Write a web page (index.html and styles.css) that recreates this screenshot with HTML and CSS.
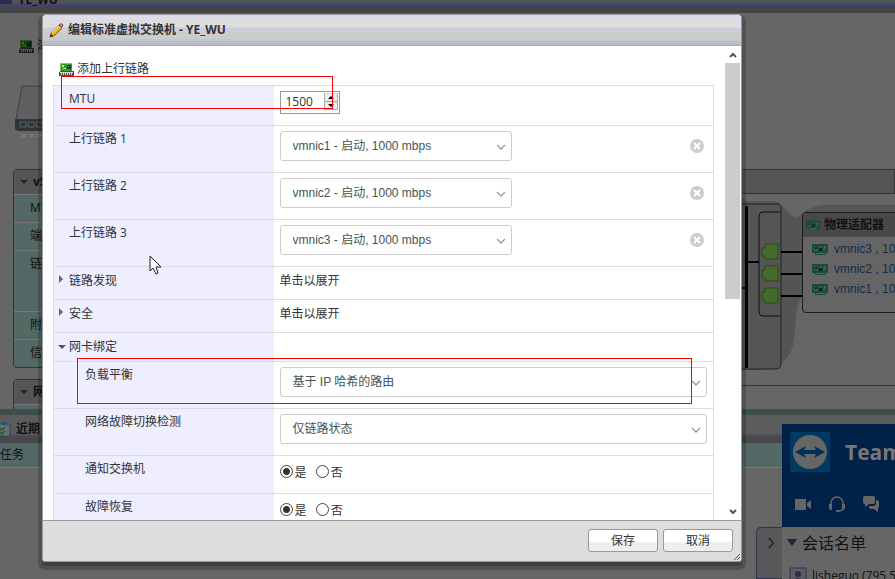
FILE: index.html
```html
<!DOCTYPE html>
<html lang="zh-CN">
<head>
    <meta charset="utf-8">
    <title>编辑标准虚拟交换机 - YE_WU</title>
    <link rel="stylesheet" href="styles.css">
</head>
<body>
    <!-- shared icons -->
    <svg class="defs" aria-hidden="true">
        <symbol id="nic" viewBox="0 0 15 13">
            <path d="M1 0h12v8H1z" fill="#2f9a3a"/>
            <path d="M1 0h12v1H1zM1 1h1v7H1z" fill="#7ecb62"/>
            <path d="M3 2h2v2H3zM4 5h3v1H4z" fill="#e8e36a"/>
            <path d="M8 2h4v4H8z" fill="#14421c"/>
            <path d="M9 3h1v1H9z" fill="#7ecb62"/>
            <path d="M1 8h14v5H0V9h1z" fill="#4a4f4a"/>
            <path d="M1 9h13v1H1zM2 10h1v2H2zM4 10h1v2H4zM6 10h1v2H6zM8 10h1v2H8zM10 10h1v2h-1zM12 10h1v2h-1z" fill="#d5d8d5"/>
        </symbol>
        <symbol id="chip" viewBox="0 0 16 11">
            <path d="M0 0h16v9h-2v2H3V9H0z" fill="#1c4a34"/>
            <path d="M2 2h4v5H2zM11 2h3v5h-3z" fill="#2c5a50"/>
            <path d="M3 3h2v2H3zM7 4h3v3H7z" fill="#10201c"/>
            <path d="M8 2h1v2H8zM12 3h2v1h-2zM4 9h9v1H4z" fill="#5a6a48"/>
        </symbol>
        <symbol id="chevron" viewBox="0 0 10 6">
            <path d="M1 1l4 4 4-4" fill="none" stroke="#999" stroke-width="1.3"/>
        </symbol>
        <symbol id="remove" viewBox="0 0 14 14">
            <circle cx="7" cy="7" r="7" fill="#ccc"/>
            <path d="M4 4l6 6M10 4l-6 6" stroke="#fff" stroke-width="2"/>
        </symbol>
    </svg>

    <!-- page behind the dialog -->
    <div class="page">
        <header class="topbar"><span class="topbar-icon"></span><b>YE_WU</b></header>
        <main class="workspace">
            <div class="side">
                <div class="side-tool"><svg class="nic"><use href="#nic"/></svg>添</div>
                <svg class="host" viewBox="0 0 60 54">
                    <path d="M7 1h53v34H1z" fill="#606060" stroke="#3c4044"/>
                    <path d="M0 34h60v12H3l-3-2z" fill="#2e3438"/>
                    <path d="M5 37h6v5H5zM13 37h6v5h-6zM21 37h6v5h-6z" fill="none" stroke="#5a6266"/>
                    <path d="M6 49h5v4H6zM14 49h5v3h-5zM22 49h5v3h-5z" fill="#757575"/>
                </svg>
                <section class="panel">
                    <h2><i class="tri down"></i>vS</h2>
                    <p>MT</p>
                    <p>端</p>
                    <p class="tall">链</p>
                    <p>附</p>
                    <p>信</p>
                </section>
                <section class="panel cut">
                    <h2><i class="tri down"></i>网</h2>
                    <p></p>
                </section>
            </div>
            <div class="topology">
                <div class="topology-head"></div>
                <div class="topology-canvas">
                    <svg class="wires" viewBox="0 0 155 192">
                        <path d="M0 0l6 7h30c8 3 12 15 19 16s8-10 30-12h70v104h-55c-20-2-30-13-38-12-8 10-5 30-9 48s-20 25-38 25H0z" fill="#545454"/>
                        <path d="M0 10h36q5 0 5 5v155q0 5-5 5H0" fill="#555" stroke="#222"/>
                        <path d="M41 18H23q-4 0-4 4v96q0 4 4 4h18" fill="none" stroke="#111"/>
                        <path d="M5 12h3v162H5zM8 67h11v2H8zM0 93h5v2H0zM41 57h21v2H41zM41 79h21v2H41zM41 101h21v2H41z" fill="#000"/>
                        <path d="M25 50h13v15H25v-3h-3v-8h3zM25 72h13v15H25v-3h-3v-8h3zM25 94h13v15H25v-3h-3v-8h3z" fill="#446a2e" stroke="#2b4a10"/>
                    </svg>
                    <section class="adapters">
                        <h2><svg class="chip"><use href="#chip"/></svg>物理适配器</h2>
                        <ul>
                            <li><svg class="chip"><use href="#chip"/></svg><a href="#">vmnic3 , 10</a></li>
                            <li><svg class="chip"><use href="#chip"/></svg><a href="#">vmnic2 , 10</a></li>
                            <li><svg class="chip"><use href="#chip"/></svg><a href="#">vmnic1 , 10</a></li>
                        </ul>
                    </section>
                </div>
            </div>
        </main>
        <section class="tasks">
            <h2>
                <svg class="clip" viewBox="0 0 12 16">
                    <path d="M-2 3h12v12H-2z" fill="#66706e" stroke="#1f4a5c"/>
                    <path d="M2 1h5v3H2z" fill="#1f5a78"/>
                    <path d="M0 7l2 2 3-3M0 11l2 2 3-3" fill="none" stroke="#1f5a1f" stroke-width="1.3"/>
                </svg>近期
            </h2>
            <div class="tasks-cols">任务</div>
        </section>
    </div>

    <!-- contact list window -->
    <aside class="viewer">
        <button type="button" class="viewer-toggle" aria-label="折叠">
            <svg viewBox="0 0 8 14"><path d="M1 1l5 6-5 6" fill="none" stroke="#222833" stroke-width="2"/></svg>
        </button>
        <div class="viewer-main">
            <div class="viewer-head">
                <div class="viewer-brand">
                    <svg class="logo" viewBox="0 0 40 40">
                        <rect width="40" height="40" rx="2" fill="#003a60"/>
                        <circle cx="20" cy="20" r="17" fill="#666"/>
                        <path d="M5 20l11-6-2 4h12l-2-4 11 6-11 6 2-4H14l2 4z" fill="#002f5a"/>
                    </svg>
                    <b>TeamViewer</b>
                </div>
                <div class="viewer-tools">
                    <svg viewBox="0 0 18 18"><path d="M1 4h11v11H1zM13 8l4-3v9l-4-3z" fill="#666"/></svg>
                    <svg viewBox="0 0 18 18"><path d="M3 9V8a6 6 0 0 1 12 0v1M15 13q0 3-5 3" fill="none" stroke="#666" stroke-width="1.5"/><path d="M1 9h3v6H3q-2 0-2-3zM17 9h-3v6h1q2 0 2-3zM8 15h3v2H8z" fill="#666"/></svg>
                    <svg viewBox="0 0 18 18"><path d="M3 1h8q2 0 2 2v4q0 2-2 2H7l-4 3V9Q1 9 1 7V3q0-2 2-2z" fill="#666"/><path d="M14 5q3 0 3 3v3q0 2-1 2v4l-4-3H9q-2 0-2-3h5q2-1 2-3z" fill="#666"/></svg>
                </div>
            </div>
            <div class="viewer-group"><i></i>会话名单</div>
            <div class="viewer-contact">
                <svg viewBox="0 0 18 18"><path d="M1 1h16v17H1z" fill="#5c5c66" stroke="#33334a"/><circle cx="9" cy="7" r="3" fill="#2c3040"/><path d="M4 17q0-6 5-6t5 6z" fill="#2c3040"/></svg>
                lisheguo (795 5
            </div>
        </div>
    </aside>

    <form class="dialog">
        <header class="dialog-title">
            <svg viewBox="0 0 15 15">
                <path d="M1 14l1-4 8-8 3 3-8 8z" fill="#f2a91c" stroke="#8a5a10" stroke-width="1"/>
                <path d="M3 10l7-7" stroke="#ffe07a" stroke-width="1.5"/>
                <path d="M10 2l1-1q2-1 3 1l-1 2z" fill="#c98a8a" stroke="#7d5555"/>
                <path d="M1 14l1-3 2 2z" fill="#222"/>
            </svg>
            <h1>编辑标准虚拟交换机 - YE_WU</h1>
        </header>

        <div class="dialog-body">
            <div class="content">
                <a class="add" href="#"><svg class="nic"><use href="#nic"/></svg>添加上行链路</a>
                <table class="settings">
                    <tr class="mtu">
                        <th><label for="mtu">MTU</label></th>
                        <td>
                            <span class="spinner">
                                <input id="mtu" type="text" value="1500">
                                <span class="steps">
                                    <button type="button" aria-label="增加"><svg viewBox="0 0 6 3"><path d="M0 3l3-3 3 3z"/></svg></button>
                                    <button type="button" aria-label="减少"><svg viewBox="0 0 6 3"><path d="M0 0l3 3 3-3z"/></svg></button>
                                </span>
                            </span>
                        </td>
                    </tr>
                    <tr class="field">
                        <th><label for="link1">上行链路 1</label></th>
                        <td><div class="line">
                            <span class="select"><select id="link1"><option>vmnic1 - 启动, 1000 mbps</option></select><svg><use href="#chevron"/></svg></span>
                            <button type="button" class="remove" aria-label="移除"><svg><use href="#remove"/></svg></button>
                        </div></td>
                    </tr>
                    <tr class="field">
                        <th><label for="link2">上行链路 2</label></th>
                        <td><div class="line">
                            <span class="select"><select id="link2"><option>vmnic2 - 启动, 1000 mbps</option></select><svg><use href="#chevron"/></svg></span>
                            <button type="button" class="remove" aria-label="移除"><svg><use href="#remove"/></svg></button>
                        </div></td>
                    </tr>
                    <tr class="field">
                        <th><label for="link3">上行链路 3</label></th>
                        <td><div class="line">
                            <span class="select"><select id="link3"><option>vmnic3 - 启动, 1000 mbps</option></select><svg><use href="#chevron"/></svg></span>
                            <button type="button" class="remove" aria-label="移除"><svg><use href="#remove"/></svg></button>
                        </div></td>
                    </tr>
                    <tr class="group">
                        <th><i class="tri right"></i>链路发现</th>
                        <td>单击以展开</td>
                    </tr>
                    <tr class="group">
                        <th><i class="tri right"></i>安全</th>
                        <td>单击以展开</td>
                    </tr>
                    <tr class="group open">
                        <th><i class="tri down"></i>网卡绑定</th>
                        <td></td>
                    </tr>
                    <tr class="field sub">
                        <th><label for="balance">负载平衡</label></th>
                        <td><span class="select wide"><select id="balance"><option>基于 IP 哈希的路由</option></select><svg><use href="#chevron"/></svg></span></td>
                    </tr>
                    <tr class="field sub">
                        <th><label for="detect">网络故障切换检测</label></th>
                        <td><span class="select wide"><select id="detect"><option>仅链路状态</option></select><svg><use href="#chevron"/></svg></span></td>
                    </tr>
                    <tr class="choice sub">
                        <th>通知交换机</th>
                        <td>
                            <label><input type="radio" name="notify" checked><span>是</span></label>
                            <label><input type="radio" name="notify"><span>否</span></label>
                        </td>
                    </tr>
                    <tr class="choice sub">
                        <th>故障恢复</th>
                        <td>
                            <label><input type="radio" name="failback" checked><span>是</span></label>
                            <label><input type="radio" name="failback"><span>否</span></label>
                        </td>
                    </tr>
                </table>
                <div class="mark mark-mtu"></div>
                <div class="mark mark-balance"></div>
            </div>
            <div class="scrollbar">
                <svg viewBox="0 0 8 6"><path d="M1 5l3-3 3 3" fill="none" stroke="#555" stroke-width="2"/></svg>
                <div class="thumb"></div>
                <svg class="end" viewBox="0 0 8 6"><path d="M1 1l3 3 3-3" fill="none" stroke="#555" stroke-width="2"/></svg>
            </div>
        </div>

        <footer class="dialog-buttons">
            <button type="submit">保存</button>
            <button type="button">取消</button>
            <svg class="grip" viewBox="0 0 6 6"><path d="M0 6l6-6M3 6l3-3" stroke="#555"/></svg>
        </footer>
    </form>

    <svg class="cursor" viewBox="0 0 13 20">
        <path d="M1 1v15l3-3 3 6 2-1-2-6h5z" fill="#fff" stroke="#1a1a2a"/>
    </svg>
</body>
</html>
```
FILE: styles.css
```css
* {
    box-sizing: border-box;
}
body {
    margin: 0;
    height: 100vh;
    overflow: hidden;
    position: relative;
    background: #666;
    color: #333;
    font: 12px/18px "Open Sans", "Noto Sans CJK SC", sans-serif;
}
h1, h2, p, ul {
    margin: 0;
    padding: 0;
    font-size: 12px;
}
ul {
    list-style: none;
}
button, input, select {
    font: inherit;
    color: inherit;
    margin: 0;
}
svg {
    display: block;
    flex: none;
}
.defs {
    position: absolute;
    width: 0;
    height: 0;
}
.nic {
    width: 15px;
    height: 13px;
}
.chip {
    width: 16px;
    height: 11px;
}
.tri {
    width: 0;
    height: 0;
    border: 4px solid transparent;
}
.tri.down {
    border-top-color: #555;
    border-bottom-width: 0;
}
.tri.right {
    border-left-color: #666;
    border-right-width: 0;
}

/* dimmed page */
.page {
    height: 100%;
    display: flex;
    flex-direction: column;
    color: #111;
}
.topbar {
    height: 13px;
    flex: none;
    display: flex;
    align-items: flex-end;
    gap: 6px;
    overflow: hidden;
    padding-bottom: 4px;
    background: linear-gradient(#555 2px, #46565a 2px, #46565a 4px, #444460 4px, #444460 7px, #444 7px);
}
.topbar-icon {
    width: 12px;
    height: 4px;
    margin-bottom: 5px;
    background: #2c2c50;
}
.workspace {
    height: 396px;
    display: flex;
    flex: none;
    overflow: hidden;
}
.side {
    width: 300px;
    padding-left: 13px;
}
.side-tool {
    display: flex;
    align-items: center;
    gap: 3px;
    padding: 24px 0 0 6px;
}
.side-tool .nic {
    filter: brightness(.4);
}
.host {
    width: 60px;
    height: 54px;
    margin: 30px 0 30px 2px;
}
.panel {
    border: 1px solid #333;
    border-radius: 4px;
    margin-bottom: 11px;
    overflow: hidden;
    background: #546866;
}
.panel h2 {
    display: flex;
    align-items: center;
    gap: 5px;
    height: 24px;
    padding-left: 6px;
    background: #555;
}
.panel h2 .tri {
    border-top-color: #222;
}
.panel p {
    height: 28px;
    padding: 4px 0 0 16px;
    border-top: 1px solid #777;
}
.panel .tall {
    height: 61px;
}
.topology {
    flex: 1;
    padding-top: 156px;
}
.topology-head {
    height: 25px;
    background: #555;
    border: 1px solid #333;
}
.topology-canvas {
    position: relative;
    height: 192px;
    border-bottom: 1px solid #333;
}
/* nodes of the network diagram, placed from the right edge */
.wires {
    position: absolute;
    right: 0;
    top: 0;
    width: 155px;
    height: 192px;
}
.adapters {
    position: absolute;
    right: -4px;
    top: 18px;
    width: 97px;
    height: 101px;
    border: 1px solid #1c1c1c;
    border-radius: 4px;
    background: #656565;
    white-space: nowrap;
    overflow: hidden;
}
.adapters h2 {
    display: flex;
    align-items: center;
    gap: 4px;
    height: 24px;
    padding-left: 3px;
    background: #484848;
}
.adapters h2 .chip {
    width: 14px;
}
.adapters ul {
    padding: 2px 0 0 9px;
}
.adapters li {
    display: flex;
    align-items: center;
    gap: 6px;
    height: 20px;
    font-family: "Liberation Sans", "Noto Sans CJK SC", sans-serif;
}
.adapters a {
    color: #132c49;
    text-decoration: none;
}
.tasks {
    flex: 1;
    border-top: 6px solid #3c4e4e;
}
.tasks h2 {
    display: flex;
    align-items: center;
    gap: 4px;
    height: 28px;
    background: linear-gradient(#5c5c5c 18px, #50506a 20px, #484848 22px);
}
.clip {
    width: 12px;
    height: 16px;
}
.tasks-cols {
    height: 25px;
    padding-top: 3px;
    background: #546866;
    border-bottom: 1px solid #777;
}

/* contact list */
.viewer {
    position: absolute;
    right: 0;
    bottom: 0;
    width: 139px;
    height: 155px;
    display: flex;
    align-items: flex-end;
}
.viewer-toggle {
    width: 26px;
    height: 52px;
    padding: 0 0 20px 11px;
    border: 1px solid #33334a;
    border-right: 0;
    border-radius: 5px 0 0 0;
    background: #585858;
}
.viewer-toggle svg {
    width: 7px;
    height: 12px;
}
.viewer-main {
    flex: 1;
    height: 155px;
    overflow: hidden;
    white-space: nowrap;
    background: #666;
    color: #111;
}
.viewer-head {
    height: 103px;
    padding: 8px;
    background: #002249;
}
.viewer-brand {
    display: flex;
    align-items: center;
    gap: 15px;
    color: #777;
    font-size: 21px;
}
.logo {
    width: 40px;
    height: 40px;
}
.viewer-tools {
    display: flex;
    gap: 16px;
    padding: 23px 0 0 4px;
}
.viewer-tools svg {
    width: 18px;
    height: 18px;
}
.viewer-group {
    display: flex;
    align-items: center;
    gap: 5px;
    height: 31px;
    padding-left: 5px;
    font-size: 16px;
}
.viewer-group i {
    border: 5px solid transparent;
    border-top: 7px solid #222238;
    border-bottom: 0;
}
.viewer-contact {
    display: flex;
    align-items: center;
    gap: 5px;
    padding: 9px 0 0 7px;
}
.viewer-contact svg {
    width: 18px;
    height: 18px;
}

/* dialog */
.dialog {
    position: absolute;
    top: 14px;
    right: 153px;
    bottom: 17px;
    left: 42px;
    display: flex;
    flex-direction: column;
    border: 1px solid #999;
    border-radius: 4px 4px 3px 3px;
    overflow: hidden;
    background: #fff;
    box-shadow: 0 4px 0 rgba(0, 0, 0, .2), 0 4px 0 4px rgba(0, 0, 0, .2);
}
.dialog-title {
    height: 31px;
    flex: none;
    display: flex;
    align-items: center;
    gap: 4px;
    padding-left: 6px;
    border-bottom: 1px solid #aaa;
    background: linear-gradient(#dde 3px, #ddd 4px, #ddd 12px, #ccd 13px, #ccd 17px, #ccc 17px, #ccc 24px, #bcc 24px, #bcc 26px, #bbc 26px);
}
.dialog-title svg {
    width: 15px;
    height: 15px;
}
.dialog-body {
    flex: 1;
    min-height: 0;
    display: flex;
}
.content {
    flex: 1;
    position: relative;
    overflow: hidden;
    padding: 14px 10px 0;
}
.add {
    display: flex;
    align-items: center;
    gap: 3px;
    height: 25px;
    padding: 0 0 7px 6px;
    color: #333;
    text-decoration: none;
}
.settings {
    width: 100%;
    table-layout: fixed;
    border-collapse: collapse;
    border: 1px solid #ddd;
}
.settings tr {
    border-top: 1px solid #ddd;
}
.settings th {
    width: 220px;
    padding: 4px 0 0 15px;
    background: #eef;
    text-align: left;
    font-weight: normal;
    vertical-align: top;
}
.settings td {
    padding: 5px 6px 0;
    vertical-align: top;
}
.settings .sub th {
    padding-left: 31px;
}
.mtu {
    height: 40px;
}
.field {
    height: 47px;
}
.choice {
    height: 38px;
}
.group {
    height: 33px;
}
.group.open {
    height: 29px;
}
.settings .group th {
    padding: 5px 0 0 5px;
}
.settings .group td {
    padding-top: 5px;
}
.group .tri {
    display: inline-block;
    margin-right: 6px;
    vertical-align: 2px;
}
.group .tri.down {
    margin-left: -1px;
    margin-right: 3px;
}
.line {
    display: flex;
    align-items: center;
    justify-content: space-between;
    padding-right: 3px;
}
.spinner {
    display: flex;
    width: 60px;
    height: 23px;
    padding: 1px 1px 3px 5px;
    border: 1px solid #999;
}
.spinner input {
    flex: 1;
    min-width: 0;
    padding: 0;
    border: 0;
    outline: 0;
}
.steps {
    width: 14px;
    display: flex;
    flex-direction: column;
}
.steps button {
    flex: 1;
    display: flex;
    align-items: center;
    justify-content: center;
    padding: 0;
    border: 1px solid #aaa;
    border-top-color: #ddd;
    background: #eee;
}
.steps svg {
    width: 6px;
    height: 3px;
}
.select {
    position: relative;
    display: block;
    width: 232px;
    font-family: "Liberation Sans", "Noto Sans CJK SC", sans-serif;
}
.select.wide {
    width: 100%;
}
.select select {
    appearance: none;
    display: block;
    width: 100%;
    height: 30px;
    padding: 0 24px 0 12px;
    border: 1px solid #ccc;
    border-radius: 3px;
    background: #fff;
    color: #455;
}
.select svg {
    position: absolute;
    right: 6px;
    top: 13px;
    width: 10px;
    height: 6px;
    pointer-events: none;
}
.remove {
    padding: 0;
    border: 0;
    background: none;
}
.remove svg {
    width: 14px;
    height: 14px;
}
.settings .choice td {
    padding-top: 7px;
}
.choice label {
    display: inline-flex;
    align-items: flex-start;
    gap: 2px;
    margin-right: 6px;
}
.choice input {
    appearance: none;
    width: 13px;
    height: 13px;
    margin-top: 2px;
    border: 1px solid #444;
    border-radius: 50%;
    background: #fff;
}
.choice input:checked {
    background: radial-gradient(#333 3px, #fff 4px);
}
.choice span {
    padding-top: 1px;
}
.scrollbar {
    width: 17px;
    display: flex;
    flex-direction: column;
    align-items: center;
    padding: 6px 1px 5px;
}
.scrollbar svg {
    width: 8px;
    height: 6px;
}
.thumb {
    width: 15px;
    height: 51%;
    margin-top: 5px;
    background: #ccc;
}
.scrollbar .end {
    margin-top: auto;
}
.dialog-buttons {
    position: relative;
    flex: none;
    display: flex;
    justify-content: flex-end;
    align-items: flex-start;
    gap: 5px;
    height: 41px;
    padding: 8px 8px 0;
    border-top: 1px solid #999;
    background: #ddd;
}
.dialog-buttons button {
    width: 70px;
    height: 23px;
    padding: 0;
    border: 1px solid #999;
    border-radius: 3px;
    background: linear-gradient(#fff 55%, #eee 55%);
}
.grip {
    position: absolute;
    right: 1px;
    bottom: 1px;
    width: 6px;
    height: 6px;
}

/* red frames over the highlighted settings */
.mark {
    position: absolute;
    border: 1px solid #f00;
    pointer-events: none;
}
.mark-mtu {
    top: 30px;
    left: 18px;
    width: 272px;
    height: 33px;
}
.mark-balance {
    top: 312px;
    left: 34px;
    right: 32px;
    height: 46px;
}
.cursor {
    position: absolute;
    left: 149px;
    top: 255px;
    width: 13px;
    height: 20px;
}
```
